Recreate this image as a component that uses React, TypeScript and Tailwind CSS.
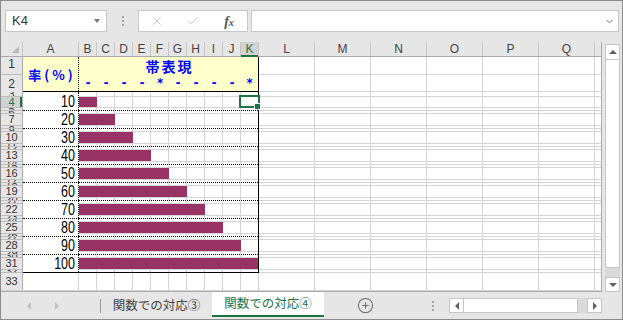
import { Check, ChevronDown, CirclePlus, X } from "lucide-react";

const VALUES = [10, 20, 30, 40, 50, 60, 70, 80, 90, 100];
const BK = ["B", "C", "D", "E", "F", "G", "H", "I", "J", "K"];
const LQ = ["L", "M", "N", "O", "P", "Q"];
const MARKS = ["-", "-", "-", "-", "*", "-", "-", "-", "-", "*"];

// L..Q columns plus the partly visible one at the right edge
function LQCells() {
  return (
    <div className="flex h-full">
      {LQ.map((c) => (
        <div key={c} className="w-[56px] shrink-0 border-r border-[#d4d4d4]" />
      ))}
      <div className="flex-1" />
    </div>
  );
}

// B..K columns inside the black frame (last one has no own gridline)
function BKCells() {
  return (
    <div className="flex h-full">
      {BK.map((c, i) => (
        <div
          key={c}
          className={i === 9 ? "w-[17px] shrink-0" : "w-[18px] shrink-0 border-r border-[#d4d4d4]"}
        />
      ))}
    </div>
  );
}

function HeadSlice({
  n,
  className,
  selected,
}: {
  n: number;
  className: string;
  selected?: boolean;
}) {
  return (
    <div
      className={`relative flex items-center justify-center overflow-hidden border-b border-[#bdbdbd] text-[11px] leading-none ${
        selected ? "bg-[#d2d2d2] text-[#217346]" : "text-[#333]"
      } ${className}`}
    >
      {n}
      {selected && <div className="absolute right-0 top-0 bottom-0 w-[2px] bg-[#217346]" />}
    </div>
  );
}

function Group({ i }: { i: number }) {
  const first = i === 0;
  const last = i === 9;
  const v = VALUES[i];
  const topH = first ? "h-[5px]" : "h-[3px]";
  const mainH = first ? "h-[11px]" : "h-[12px]";
  const line = last ? "border-solid" : "border-dotted";

  return (
    <div className={`flex shrink-0 ${first ? "h-[19px]" : "h-[18px]"}`}>
      {/* row numbers: small row, bar row, small row */}
      <div className="w-[22px] shrink-0 flex flex-col border-r border-[#ababab] bg-[#e6e6e6]">
        <HeadSlice n={3 + 3 * i} className={`${topH} shrink-0`} />
        <HeadSlice n={4 + 3 * i} className={`${mainH} shrink-0`} selected={first} />
        <HeadSlice n={5 + 3 * i} className="flex-1" />
      </div>

      {/* A: rate */}
      <div className={`w-[56px] shrink-0 border-b border-black ${line}`}>
        <div className="h-full flex flex-col border-r border-dotted border-black">
          <div className={`${topH} shrink-0`} />
          <div className={`${mainH} shrink-0 flex items-center justify-end pr-[3px]`}>
            <span className="inline-block scale-y-[1.25] font-['Liberation_Sans',Arial,sans-serif] text-[12.5px] leading-none text-black">
              {v}
            </span>
          </div>
        </div>
      </div>

      {/* B..K: band */}
      <div className="relative w-[180px] shrink-0 border-r border-black">
        <div className={`h-full flex flex-col border-b border-black ${line}`}>
          <div className={`${topH} shrink-0 border-b border-[#d4d4d4]`}>
            <BKCells />
          </div>
          <div className={`relative ${mainH} shrink-0 border-b border-[#d4d4d4]`}>
            <BKCells />
            <div
              className="absolute left-0 top-0 bottom-0 bg-[#993366]"
              style={{ width: Math.min(v * 1.8, 179) }}
            />
          </div>
          <div className="flex-1">
            <BKCells />
          </div>
        </div>
        {first && (
          <>
            <div className="absolute left-[160px] top-[3px] w-[21px] h-[13px] border-2 border-[#217346]" />
            <div className="absolute left-[175px] top-[11px] w-[7px] h-[7px] border border-white bg-[#217346]" />
          </>
        )}
      </div>

      {/* L..Q */}
      <div className="flex-1 flex flex-col">
        <div className={`${topH} shrink-0 border-b border-[#d4d4d4]`}>
          <LQCells />
        </div>
        <div className={`${mainH} shrink-0 border-b border-[#d4d4d4]`}>
          <LQCells />
        </div>
        <div className="flex-1 border-b border-[#d4d4d4]">
          <LQCells />
        </div>
      </div>
    </div>
  );
}

function Dots() {
  return (
    <div className="flex flex-col gap-[2px]">
      <div className="w-[2px] h-[2px] bg-[#a6a6a6]" />
      <div className="w-[2px] h-[2px] bg-[#a6a6a6]" />
      <div className="w-[2px] h-[2px] bg-[#a6a6a6]" />
    </div>
  );
}

export default function App() {
  return (
    <div className="w-[623px] h-[320px] overflow-hidden flex flex-col border border-[#8c8c8c] bg-[#e6e6e6] font-['Liberation_Sans',Arial,sans-serif]">
      {/* formula bar */}
      <div className="h-[41px] shrink-0 flex items-start pt-[9px] pl-[4px]">
        <div className="w-[102px] h-[22px] flex items-center justify-between bg-white border border-[#c6c6c6] pl-[6px] pr-[6px]">
          <span className="text-[13px] text-[#333]">K4</span>
          <div className="w-0 h-0 border-x-[3px] border-x-transparent border-t-[4px] border-t-[#777]" />
        </div>
        <div className="ml-[15px] h-[22px] flex items-center">
          <Dots />
        </div>
        <div className="ml-[14px] w-[110px] h-[22px] flex bg-white border border-[#c6c6c6]">
          <div className="w-[36px] flex items-center justify-center">
            <X size={14} strokeWidth={1.5} color="#c4c4c4" />
          </div>
          <div className="w-[36px] flex items-center justify-center">
            <Check size={14} strokeWidth={1.5} color="#c4c4c4" />
          </div>
          <div className="w-[36px] flex items-center justify-center font-['Liberation_Serif',serif] italic font-bold text-[#555]">
            <span className="text-[14px]">f</span>
            <span className="text-[10px] mt-[3px]">x</span>
          </div>
        </div>
        <div className="ml-[3px] w-[368px] h-[22px] flex items-center justify-end pr-[3px] bg-white border border-[#c6c6c6]">
          <ChevronDown size={11} strokeWidth={2} color="#666" />
        </div>
      </div>

      {/* sheet + vertical scrollbar */}
      <div className="h-[250px] shrink-0 flex">
        <div className="w-[601px] shrink-0 flex flex-col border-r border-b border-[#ababab] bg-white">
          {/* column headers */}
          <div className="h-[15px] shrink-0 flex bg-[#e6e6e6] border-b border-[#ababab] text-[12px] text-[#444]">
            <div className="relative w-[22px] shrink-0 border-r border-[#c6c6c6]">
              <div className="absolute right-[3px] bottom-[3px] w-0 h-0 border-l-[7px] border-l-transparent border-b-[7px] border-b-[#b8b8b8]" />
            </div>
            <div className="w-[56px] shrink-0 flex items-center justify-center border-r border-[#c6c6c6]">A</div>
            {BK.map((c) =>
              c === "K" ? (
                <div
                  key={c}
                  className="relative w-[18px] shrink-0 flex items-center justify-center bg-[#d2d2d2] text-[#217346] border-r border-[#c6c6c6]"
                >
                  {c}
                  <div className="absolute left-0 right-0 -bottom-[1px] h-[2px] bg-[#217346]" />
                </div>
              ) : (
                <div key={c} className="w-[18px] shrink-0 flex items-center justify-center border-r border-[#c6c6c6]">
                  {c}
                </div>
              )
            )}
            {LQ.map((c) => (
              <div key={c} className="w-[56px] shrink-0 flex items-center justify-center border-r border-[#c6c6c6]">
                {c}
              </div>
            ))}
            <div className="flex-1" />
          </div>

          {/* rows 1-2 */}
          <div className="h-[35px] shrink-0 flex">
            <div className="w-[22px] shrink-0 flex flex-col border-r border-[#ababab] bg-[#e6e6e6] text-[12px] text-[#333]">
              <div className="h-[18px] shrink-0 flex items-end justify-center pb-[1px] border-b border-[#bdbdbd]">1</div>
              <div className="flex-1 flex items-end justify-center pb-[1px] border-b border-[#bdbdbd]">2</div>
            </div>
            <div className="w-[236px] shrink-0 flex bg-[#ffffcc] border-b border-black">
              <div className="w-[56px] shrink-0 flex items-center justify-center border-r border-dotted border-black">
                <span className="font-['Noto_Sans_CJK_JP',sans-serif] font-bold text-[13px] leading-none tracking-[3px] text-[#0000ff] pl-[3px]">
                  率(%)
                </span>
              </div>
              <div className="w-[180px] shrink-0 flex flex-col border-r border-black">
                <div className="h-[18px] shrink-0 flex items-center justify-center">
                  <span className="font-['Noto_Sans_CJK_JP',sans-serif] font-bold text-[14px] leading-none tracking-[2px] text-[#0000ff] pl-[2px]">
                    帯表現
                  </span>
                </div>
                <div className="flex-1 flex">
                  {MARKS.map((m, k) => (
                    <div
                      key={k}
                      className={`${k === 9 ? "flex-1" : "w-[18px] shrink-0"} flex items-center justify-center font-['DejaVu_Sans_Mono',monospace] font-bold text-[12px] leading-none text-[#0000ff]`}
                    >
                      {m}
                    </div>
                  ))}
                </div>
              </div>
            </div>
            <div className="flex-1 flex flex-col">
              <div className="h-[18px] shrink-0 border-b border-[#d4d4d4]">
                <LQCells />
              </div>
              <div className="flex-1 border-b border-[#d4d4d4]">
                <LQCells />
              </div>
            </div>
          </div>

          {/* rows 3-32 */}
          {VALUES.map((_, i) => (
            <Group key={i} i={i} />
          ))}

          {/* row 33 */}
          <div className="h-[18px] shrink-0 flex border-b border-[#d4d4d4]">
            <div className="w-[22px] shrink-0 flex items-center justify-center border-r border-[#ababab] bg-[#e6e6e6] text-[11px] text-[#333]">
              33
            </div>
            <div className="w-[56px] shrink-0 border-r border-[#d4d4d4]" />
            {BK.map((c) => (
              <div key={c} className="w-[18px] shrink-0 border-r border-[#d4d4d4]" />
            ))}
            <div className="flex-1">
              <LQCells />
            </div>
          </div>
        </div>

        {/* vertical scrollbar */}
        <div className="w-[20px] shrink-0 flex flex-col pl-[3px] pr-[2px] pt-[2px]">
          <div className="h-[16px] shrink-0 flex items-center justify-center bg-white border border-[#c6c6c6]">
            <div className="w-0 h-0 border-x-[4px] border-x-transparent border-b-[4px] border-b-[#606060]" />
          </div>
          <div className="flex-1 bg-white border-x border-b border-[#c6c6c6]" />
          <div className="h-[9px] shrink-0 bg-[#dadada]" />
          <div className="h-[15px] shrink-0 flex items-center justify-center bg-white border border-[#c6c6c6]">
            <div className="w-0 h-0 border-x-[4px] border-x-transparent border-t-[4px] border-t-[#606060]" />
          </div>
        </div>
      </div>

      {/* sheet tabs */}
      <div className="h-[27px] shrink-0 flex items-center">
        <div className="w-[99px] shrink-0 flex items-center pl-[26px]">
          <div className="w-0 h-0 border-y-[4px] border-y-transparent border-r-[4px] border-r-[#c0c0c0]" />
          <div className="ml-[24px] w-0 h-0 border-y-[4px] border-y-transparent border-l-[4px] border-l-[#c0c0c0]" />
        </div>
        <div className="w-[1px] h-[14px] shrink-0 bg-[#9a9a9a]" />
        <div className="w-[111px] shrink-0 self-stretch flex items-center justify-center font-['Noto_Sans_CJK_JP',sans-serif] text-[12.5px] text-[#444]">
          関数での対応③
        </div>
        <div className="w-[112px] shrink-0 self-start h-[25px] flex items-center justify-center bg-white border-b-2 border-[#217346] font-['Noto_Sans_CJK_JP',sans-serif] text-[12.5px] text-[#217346]">
          関数での対応④
        </div>
        <div className="ml-[33px] w-[17px] shrink-0 flex items-center justify-center">
          <CirclePlus size={17} strokeWidth={1.5} color="#6b6b6b" />
        </div>
        <div className="ml-[58px] shrink-0">
          <Dots />
        </div>
        <div className="ml-[15px] w-[153px] h-[15px] shrink-0 flex">
          <div className="w-[15px] shrink-0 flex items-center justify-center bg-white border border-[#c6c6c6]">
            <div className="w-0 h-0 border-y-[4px] border-y-transparent border-r-[4px] border-r-[#606060]" />
          </div>
          <div className="w-[114px] shrink-0 bg-white border-y border-r border-[#c6c6c6]" />
          <div className="flex-1 bg-[#dadada]" />
          <div className="w-[15px] shrink-0 flex items-center justify-center bg-white border border-[#c6c6c6]">
            <div className="w-0 h-0 border-y-[4px] border-y-transparent border-l-[4px] border-l-[#606060]" />
          </div>
        </div>
      </div>
    </div>
  );
}
